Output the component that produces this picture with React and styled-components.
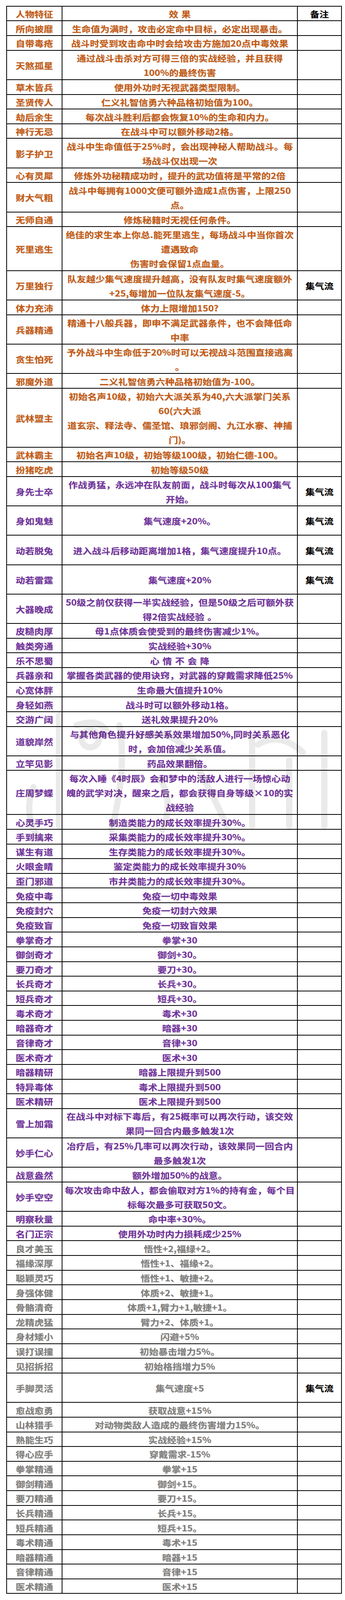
import React from "react";
import styled, { createGlobalStyle } from "styled-components";

/* Reference geometry is expressed in reference pixels and mapped onto the
   viewport height, so the whole 4136px-tall sheet always fits the window. */
const v = (px) => `calc(${px} * 100vh / 4136)`;

const GlobalStyle = createGlobalStyle`
  html, body { margin: 0; padding: 0; background: #ffffff; }
  body { font-family: "Noto Sans CJK SC", "Noto Sans", sans-serif; }
`;

const palette = {
  orange: "#C65911",
  purple: "#7030A0",
  gray: "#7F7F7F",
  black: "#000000",
};

const Page = styled.div`
  position: relative;
  width: 884px;
  box-sizing: border-box;
  padding: ${v(15)} 8px 0 16px;
`;

const Table = styled.div`
  display: grid;
  grid-template-columns: 140px 601px 111px;
  gap: 2px;
  padding: 2px;
  width: 860px;
  box-sizing: border-box;
  background: #000000;
`;

const Cell = styled.div`
  height: calc(${(p) => p.$span * 38} * 100vh / 4136 - 2px);
  background: #ffffff;
  display: flex;
  flex-direction: column;
  align-items: center;
  justify-content: center;
  gap: 2px;
  color: ${(p) => palette[p.$tone]};
`;

const Line = styled.span`
  display: block;
  white-space: nowrap;
  font-size: 24px;
  font-weight: 700;
  line-height: 35px;
  transform: scaleY(0.87);
  text-shadow: 1px 1px 1px rgba(0, 0, 0, 0.22);
`;

const Gap = styled.span`
  display: inline-block;
  width: 8px;
`;

const Watermark = styled.svg`
  position: absolute;
  left: 16px;
  top: ${v(1835)};
  width: 860px;
  height: ${v(330)};
  pointer-events: none;
  opacity: 0.08;
`;

const O = "orange";
const P = "purple";
const G = "gray";
const JQ = "集气流";

const rows = [
  ["所向披靡", ["生命值为满时，攻击必定命中目标，必定出现暴击。"], 1, O],
  ["自带毒疮", ["战斗时受到攻击命中时会给攻击方施加20点中毒效果"], 1, O],
  ["天煞孤星", ["通过战斗击杀对方可得三倍的实战经验，并且获得", "100%的最终伤害"], 2, O],
  ["草木皆兵", ["使用外功时无视武器类型限制。"], 1, O],
  ["圣贤传人", ["仁义礼智信勇六种品格初始值为100。"], 1, O],
  ["劫后余生", ["每次战斗胜利后都会恢复10%的生命和内力。"], 1, O],
  ["神行无忌", ["在战斗中可以额外移动2格。"], 1, O],
  ["影子护卫", ["战斗中生命值低于25%时，会出现神秘人帮助战斗。每", "场战斗仅出现一次"], 2, O],
  ["心有灵犀", ["修炼外功秘精成功时，提升的武功值将是平常的2倍"], 1, O],
  ["财大气粗", ["战斗中每拥有1000文便可额外造成1点伤害，上限250", "点。"], 2, O],
  ["无师自通", ["修炼秘籍时无视任何条件。"], 1, O],
  ["死里逃生", ["绝佳的求生本上你总.能死里逃生，每场战斗中当你首次", "遭遇致命", "伤害时会保留1点血量。"], 3, O],
  ["万里独行", ["队友越少集气速度提升越高，没有队友时集气速度额外", "+25,每增加一位队友集气速度-5。"], 2, O, JQ],
  ["体力充沛", ["体力上限增加150?"], 1, O],
  ["兵器精通", ["精通十八般兵器，即申不满足武器条件，也不会降低命", "中率"], 2, O],
  ["贪生怕死", ["予外战斗中生命低于20%时可以无视战斗范围直接逃离", "。"], 2, O],
  ["邪魔外道", ["二义礼智信勇六种品格初始值为-100。"], 1, O],
  ["武林盟主", ["初始名声10级，初始六大派关系为40,六大派掌门关系", "60(六大派", "道玄宗、释法寺、儒圣馆、琅邪剑阁、九江水寨、神捕", "门)。"], 4, O],
  ["武林霸主", ["初始名声10级，初始等级100级，初始仁德-100。"], 1, O],
  ["扮猪吃虎", ["初始等级50级"], 1, O],
  ["身先士卒", ["作战勇猛，永远冲在队友前面，战斗时每次从100集气", "开始。"], 2, P, JQ],
  ["身如鬼魅", ["集气速度+20%。"], 2, P, JQ],
  ["动若脱兔", ["进入战斗后移动距离增加1格，集气速度提升10点。"], 2, P, JQ],
  ["动若雷霆", ["集气速度+20%"], 2, P, JQ],
  ["大器晚成", ["50级之前仅获得一半实战经验，但是50级之后可额外获", <>得2倍实战经验<Gap />。</>], 2, P],
  ["皮糙肉厚", ["母1点体质会使受到的最终伤害减少1%。"], 1, P],
  ["触类旁通", ["实战经验+30%"], 1, P],
  ["乐不思蜀", [<>心<Gap />情<Gap />不<Gap />会<Gap />降</>], 1, P],
  ["兵器亲和", ["掌握各类武器的使用诀窍，对武器的穿戴需求降低25%"], 1, P],
  ["心宽体胖", ["生命最大值提升10%"], 1, P],
  ["身轻如燕", ["战斗时可以额外移动1格。"], 1, P],
  ["交游广阔", ["送礼效果提升20%"], 1, P],
  ["道貌岸然", ["与其他角色提升好感关系效果增加50%,同时关系恶化", "时，会加倍减少关系值。"], 2, P],
  ["立竿见影", ["药品效果翻倍。"], 1, P],
  ["庄周梦蝶", ["每次入睡《4时辰》会和梦中的活敌人进行一场惊心动", "魄的武学对决，醒来之后，都会获得自身等级×10的实", "战经验"], 3, P],
  ["心灵手巧", ["制造类能力的成长效率提升30%。"], 1, P],
  ["手到擒来", ["采集类能力的成长效率提升30%。"], 1, P],
  ["谋生有道", ["生存类能力的成长效率提升30%。"], 1, P],
  ["火眼金睛", ["鉴定类能力的成长效率提升30%"], 1, P],
  ["歪门邪道", ["市井类能力的成长效率提升30%。"], 1, P],
  ["免疫中毒", ["免疫一切中毒效果"], 1, P],
  ["免疫封穴", ["免疫一切封六效果"], 1, P],
  ["免疫致盲", ["免疫一切致盲效果"], 1, P],
  ["拳掌奇才", ["拳掌+30"], 1, P],
  ["御剑奇才", ["御剑+30。"], 1, P],
  ["要刀奇才", ["要刀+30。"], 1, P],
  ["长兵奇才", ["长兵+30。"], 1, P],
  ["短兵奇才", ["短兵+30。"], 1, P],
  ["毒术奇才", ["毒术+30"], 1, P],
  ["暗器奇才", ["暗器+30"], 1, P],
  ["音律奇才", ["音律+30"], 1, P],
  ["医术奇才", ["医术+30"], 1, P],
  ["暗器精研", ["暗器上限提升到500"], 1, P],
  ["特异毒体", ["毒术上限提升到500"], 1, P],
  ["医术精研", ["医术上限提升到500"], 1, P],
  ["雪上加霜", ["在战斗中对标下毒后，有25概率可以再次行动，该交效", "果同一回合内最多触发1次"], 2, P],
  ["妙手仁心", ["冶疗后，有25%几率可以再次行动，该效果同一回合内", "最多触发1次"], 2, P],
  ["战意盎然", ["额外增加50%的战意。"], 1, P],
  ["妙手空空", ["每次攻击命中敌人，都会偷取对方1%的持有金，每个目", "标每次最多可获取50文。"], 2, P],
  ["明察秋量", ["命中率+30%。"], 1, P],
  ["名门正宗", ["使用外功时内力损耗成少25%"], 1, P],
  ["良才美玉", ["悟性+2,福绿+2。"], 1, G],
  ["福缘深厚", ["悟性+1、福缘+2。"], 1, G],
  ["聪颖灵巧", ["悟性+1、敏捷+2。"], 1, G],
  ["身强体健", ["体质+2、敏捷+1。"], 1, G],
  ["骨骼清奇", ["体质+1,臂力+1,敏捷+1。"], 1, G],
  ["龙精虎猛", ["臂力+2、体质+1。"], 1, G],
  ["身材矮小", ["闪避+5%"], 1, G],
  ["误打误撞", ["初始暴击增力5%。"], 1, G],
  ["见招拆招", ["初始格挡增力5%"], 1, G],
  ["手脚灵活", ["集气速度+5"], 2, G, JQ],
  ["愈战愈勇", ["获取战意+15%"], 1, G],
  ["山林猎手", ["对动物类敌人造成的最终伤害增力15%。"], 1, G],
  ["熟能生巧", ["实战经验+15%"], 1, G],
  ["得心应手", ["穿戴需求-15%"], 1, G],
  ["拳掌精通", ["拳掌+15"], 1, G],
  ["御剑精通", ["御剑+15。"], 1, G],
  ["要刀精通", ["要刀+15。"], 1, G],
  ["长兵精通", ["长兵+15。"], 1, G],
  ["短兵精通", ["短兵+15。"], 1, G],
  ["毒术精通", ["毒术+15"], 1, G],
  ["暗器精通", ["暗器+15"], 1, G],
  ["音律精通", ["音律+15"], 1, G],
  ["医术精通", ["医术+15"], 1, G],
];

function Row({ name, lines, span, tone, note }) {
  return (
    <>
      <Cell $span={span} $tone={tone}>
        <Line>{name}</Line>
      </Cell>
      <Cell $span={span} $tone={tone}>
        {lines.map((l, i) => (
          <Line key={i}>{l}</Line>
        ))}
      </Cell>
      <Cell $span={span} $tone="black">
        {note ? <Line>{note}</Line> : null}
      </Cell>
    </>
  );
}

export default function App() {
  return (
    <>
      <GlobalStyle />
      <Page>
        <Table>
          <Row name="人物特征" lines={[<>效<Gap />果</>]} span={1} tone={O} note="备注" />
          {rows.map(([name, lines, span, tone, note]) => (
            <Row key={name} name={name} lines={lines} span={span} tone={tone} note={note} />
          ))}
        </Table>
        <Watermark viewBox="0 0 860 330" preserveAspectRatio="none">
          <g fill="none" stroke="#000" strokeWidth="16" strokeLinecap="round">
            <path d="M 135 15 L 135 300" />
            <path d="M 70 200 Q 45 260 75 320" />
            <circle cx="215" cy="75" r="22" />
            <path d="M 180 40 Q 240 20 260 60" />
            <path d="M 290 40 Q 310 150 270 310" />
            <path d="M 340 70 Q 430 40 480 130 T 565 300" />
            <path d="M 395 180 Q 430 240 400 310" />
            <path d="M 630 70 L 630 300" />
            <path d="M 645 90 Q 700 55 760 110" />
            <path d="M 725 130 L 725 300" />
            <path d="M 815 60 L 815 300" />
          </g>
        </Watermark>
      </Page>
    </>
  );
}
